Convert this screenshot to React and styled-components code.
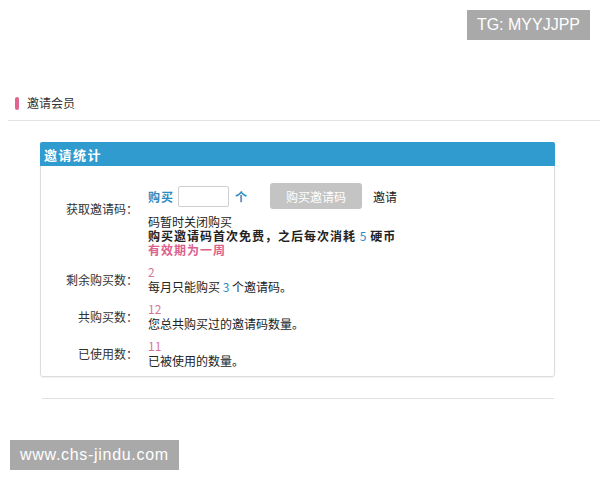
import { Fragment } from "react";
import styled, { createGlobalStyle } from "styled-components";

const GlobalStyle = createGlobalStyle`
  body {
    margin: 0;
    background: #fff;
    font-family: "Noto Sans CJK SC", "Liberation Sans", sans-serif;
    font-size: 12px;
    color: #222;
  }
`;

const Page = styled.div`
  width: 600px;
  height: 480px;
  display: flex;
  flex-direction: column;
  overflow: hidden;
`;

const TopBar = styled.div`
  display: flex;
  justify-content: flex-end;
  padding: 10px 10px 0 0;
`;

const Badge = styled.div`
  height: 30px;
  padding: 0 10px;
  display: flex;
  align-items: center;
  background: #a9a9a9;
  color: #fff;
  font-family: "Liberation Sans", Arial, sans-serif;
  font-size: 16px;
  letter-spacing: ${(p) => p.$spacing || 0}px;
`;

const SectionTitle = styled.div`
  margin: 52px 0 0 8px;
  padding: 2px 0 8px 7px;
  border-bottom: 1px solid #e2e2e2;
  display: flex;
  align-items: center;
  gap: 8px;
  line-height: 18px;
  color: #333;
`;

const PinkMark = styled.span`
  width: 4px;
  height: 13px;
  border-radius: 2px;
  background: #e0648f;
`;

const Card = styled.div`
  margin: 21px 0 0 40px;
  width: 513px;
  border: 1px solid #dcdcdc;
  border-radius: 3px;
  box-shadow: 0 1px 2px rgba(0, 0, 0, 0.06);
`;

const CardHead = styled.div`
  height: 24px;
  display: flex;
  align-items: center;
  padding-left: 4px;
  background: #2f9bcf;
  color: #fff;
  font-weight: bold;
  font-size: 13px;
  letter-spacing: 1.5px;
  border-radius: 2px 2px 0 0;
  margin: -1px -1px 0;
`;

const CardBody = styled.div`
  display: grid;
  grid-template-columns: 97px 1fr;
  column-gap: 10px;
  row-gap: 7px;
  padding: 17px 0 8px;
`;

const Label = styled.div`
  text-align: right;
  color: #333;
  align-self: ${(p) => (p.$top ? "start" : "center")};
  padding-top: ${(p) => p.$top || 0}px;
  line-height: 15px;
`;

const Cell = styled.div`
  line-height: 15px;
`;

const BuyLine = styled.div`
  display: flex;
  align-items: center;
  height: 26px;
  margin-bottom: 6px;
`;

const Blue = styled.span`
  color: #2b8bc2;
  font-weight: ${(p) => (p.$bold ? "bold" : "normal")};
  letter-spacing: ${(p) => (p.$bold ? "1px" : "0")};
`;

const Qty = styled.input`
  width: 51px;
  height: 21px;
  box-sizing: border-box;
  margin: 0 6px 0 4px;
  border: 1px solid #cfcfcf;
  border-radius: 2px;
  outline: none;
`;

const GreyButton = styled.button`
  width: 92px;
  height: 26px;
  margin: 0 11px 0 22px;
  border: none;
  border-radius: 3px;
  background: #c4c4c4;
  color: #fff;
  font-family: inherit;
  font-size: 12px;
  padding: 0;
`;

const Line = styled.div`
  line-height: 14px;
  font-weight: ${(p) => (p.$bold ? "bold" : "normal")};
  letter-spacing: ${(p) => (p.$bold ? "1px" : "0")};
  color: ${(p) => p.$color || "#222"};
`;

const Num = styled.div`
  color: #d4769c;
`;

const Divider = styled.div`
  margin: 21px 0 0 42px;
  width: 512px;
  border-top: 1px solid #e0e0e0;
`;

const Footer = styled.div`
  margin: 41px 0 0 10px;
  display: flex;
`;

const stats = [
  { label: "剩余购买数：", num: "2", text: <>每月只能购买 <Blue>3</Blue> 个邀请码。</> },
  { label: "共购买数：", num: "12", text: "您总共购买过的邀请码数量。" },
  { label: "已使用数：", num: "11", text: "已被使用的数量。" },
];

export default function App() {
  return (
    <Page>
      <GlobalStyle />
      <TopBar>
        <Badge>TG: MYYJJPP</Badge>
      </TopBar>
      <SectionTitle>
        <PinkMark />
        邀请会员
      </SectionTitle>
      <Card>
        <CardHead>邀请统计</CardHead>
        <CardBody>
          <Label $top={18}>获取邀请码：</Label>
          <Cell>
            <BuyLine>
              <Blue $bold>购买</Blue>
              <Qty />
              <Blue $bold>个</Blue>
              <GreyButton>购买邀请码</GreyButton>
              邀请
            </BuyLine>
            <Line>码暂时关闭购买</Line>
            <Line $bold>
              购买邀请码首次免费，之后每次消耗 <Blue>5</Blue> 硬币
            </Line>
            <Line $bold $color="#dc5f8e">有效期为一周</Line>
          </Cell>
          {stats.map((s) => (
            <Fragment key={s.label}>
              <Label>{s.label}</Label>
              <Cell>
                <Num>{s.num}</Num>
                <div>{s.text}</div>
              </Cell>
            </Fragment>
          ))}
        </CardBody>
      </Card>
      <Divider />
      <Footer>
        <Badge $spacing={0.7}>www.chs-jindu.com</Badge>
      </Footer>
    </Page>
  );
}
